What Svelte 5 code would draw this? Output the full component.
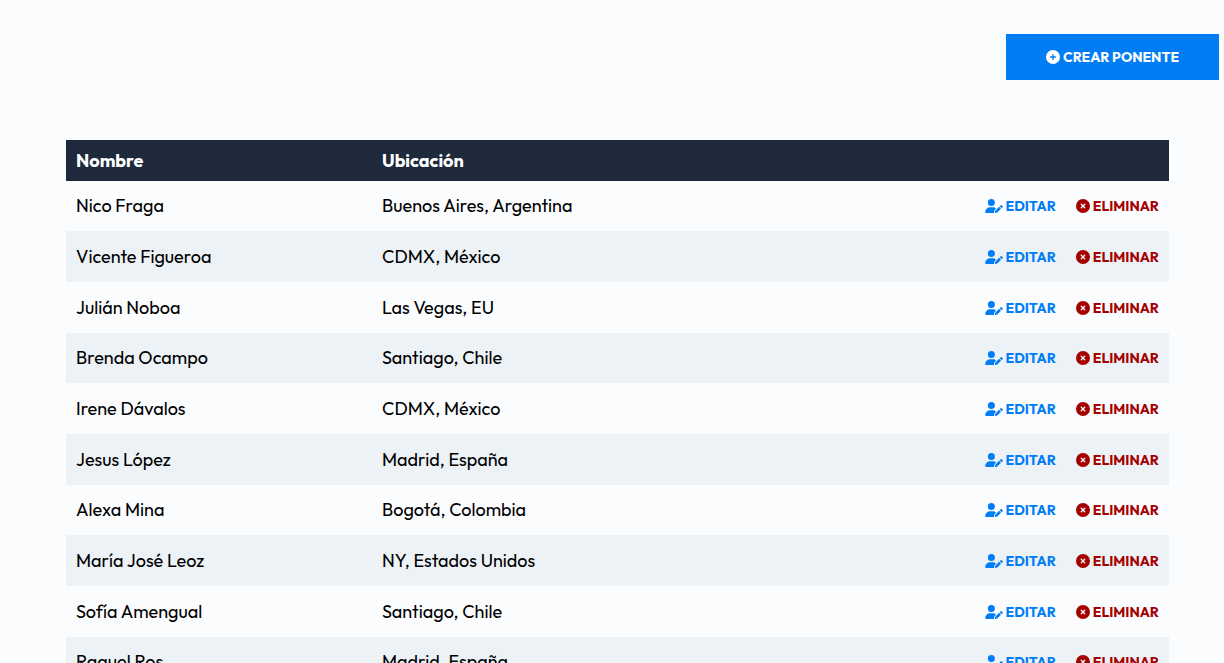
<script>
  const speakers = [
    { name: 'Nico Fraga', location: 'Buenos Aires, Argentina' },
    { name: 'Vicente Figueroa', location: 'CDMX, México' },
    { name: 'Julián Noboa', location: 'Las Vegas, EU' },
    { name: 'Brenda Ocampo', location: 'Santiago, Chile' },
    { name: 'Irene Dávalos', location: 'CDMX, México' },
    { name: 'Jesus López', location: 'Madrid, España' },
    { name: 'Alexa Mina', location: 'Bogotá, Colombia' },
    { name: 'María José Leoz', location: 'NY, Estados Unidos' },
    { name: 'Sofía Amengual', location: 'Santiago, Chile' },
    { name: 'Raquel Ros', location: 'Madrid, España' }
  ];
</script>

<main>
  <div class="toolbar">
    <a class="create" href="#crear">
      <svg class="round" viewBox="0 0 512 512" aria-hidden="true">
        <path d="M256 512A256 256 0 1 0 256 0a256 256 0 1 0 0 512zM232 344V280H168c-13.3 0-24-10.7-24-24s10.7-24 24-24h64V168c0-13.3 10.7-24 24-24s24 10.7 24 24v64h64c13.3 0 24 10.7 24 24s-10.7 24-24 24H280v64c0 13.3-10.7 24-24 24s-24-10.7-24-24z" />
      </svg>
      <span>CREAR PONENTE</span>
    </a>
  </div>

  <div class="content">
    <table>
      <thead>
        <tr>
          <th class="name" scope="col">Nombre</th>
          <th scope="col">Ubicación</th>
          <td></td>
        </tr>
      </thead>
      <tbody>
        {#each speakers as speaker}
          <tr>
            <td>{speaker.name}</td>
            <td>{speaker.location}</td>
            <td>
              <div class="actions">
                <a class="action edit" href="#editar">
                  <svg class="wide" viewBox="0 0 640 512" aria-hidden="true">
                    <path d="M224 256A128 128 0 1 0 224 0a128 128 0 1 0 0 256zm-45.7 48C79.8 304 0 383.8 0 482.3C0 498.7 13.3 512 29.7 512H322.8c-3.1-8.8-3.7-18.4-1.4-27.8l15-60.1c2.8-11.3 8.6-21.5 16.8-29.7l40.3-40.3c-32.1-31-75.7-50.1-123.9-50.1H178.3zm435.5-68.3c-15.6-15.6-40.9-15.6-56.6 0l-29.4 29.4 71 71 29.4-29.4c15.6-15.6 15.6-40.9 0-56.6l-14.4-14.4zM375.9 417c-4.1 4.1-7 9.2-8.4 14.9l-15 60.1c-1.4 5.5 .2 11.2 4.2 15.2s9.7 5.6 15.2 4.2l60.1-15c5.6-1.4 10.8-4.3 14.9-8.4L576.1 358.7l-71-71L375.9 417z" />
                  </svg>
                  <span>EDITAR</span>
                </a>
                <button class="action delete" type="button">
                  <svg class="round" viewBox="0 0 512 512" aria-hidden="true">
                    <path d="M256 512A256 256 0 1 0 256 0a256 256 0 1 0 0 512zM175 175c9.4-9.4 24.6-9.4 33.9 0l47 47 47-47c9.4-9.4 24.6-9.4 33.9 0s9.4 24.6 0 33.9l-47 47 47 47c9.4 9.4 9.4 24.6 0 33.9s-24.6 9.4-33.9 0l-47-47-47 47c-9.4 9.4-24.6 9.4-33.9 0s-9.4-24.6 0-33.9l47-47-47-47c-9.4-9.4-9.4-24.6 0-33.9z" />
                  </svg>
                  <span>ELIMINAR</span>
                </button>
              </div>
            </td>
          </tr>
        {/each}
      </tbody>
    </table>
  </div>
</main>

<style>
  :global(html) {
    scrollbar-width: none;
  }

  :global(body) {
    margin: 0;
    background: #fbfcfe;
  }

  main {
    padding: 34px 5px 0;
    color: #000;
    font-family: Outfit, Lato, sans-serif;
    font-size: 18px;
    line-height: 20px;
  }

  .toolbar {
    display: flex;
    justify-content: flex-end;
    margin-bottom: 60px;
  }

  .create {
    display: flex;
    align-items: center;
    justify-content: center;
    gap: 3px;
    padding: 13px 40px;
    background: #007df4;
    color: #fff;
    font-size: 14px;
    font-weight: 700;
    text-decoration: none;
  }

  .content {
    padding: 0 50px 0 61px;
  }

  table {
    width: 100%;
    border-collapse: collapse;
    table-layout: fixed;
  }

  .name {
    width: 286px;
  }

  thead {
    background: #1e293b;
    color: #fff;
  }

  th,
  td {
    padding: 0 10px;
    text-align: left;
  }

  th {
    height: 41px;
    font-weight: 700;
  }

  tbody tr {
    height: 51px;
  }

  tbody tr:nth-child(3n + 1) {
    height: 50px;
  }

  tbody tr:nth-child(even) {
    background: #edf2f7;
  }

  .actions {
    display: flex;
    justify-content: flex-end;
    gap: 20px;
  }

  .action {
    display: flex;
    align-items: center;
    gap: 3px;
    padding: 0;
    border: 0;
    background: none;
    font: inherit;
    font-size: 14px;
    font-weight: 700;
    line-height: 20px;
    text-decoration: none;
    cursor: pointer;
  }

  .edit {
    color: #007df4;
  }

  .delete {
    color: #a50000;
  }

  svg {
    flex: none;
    height: 14px;
    fill: currentColor;
  }

  .round {
    width: 14px;
  }

  .wide {
    width: 18px;
  }
</style>
